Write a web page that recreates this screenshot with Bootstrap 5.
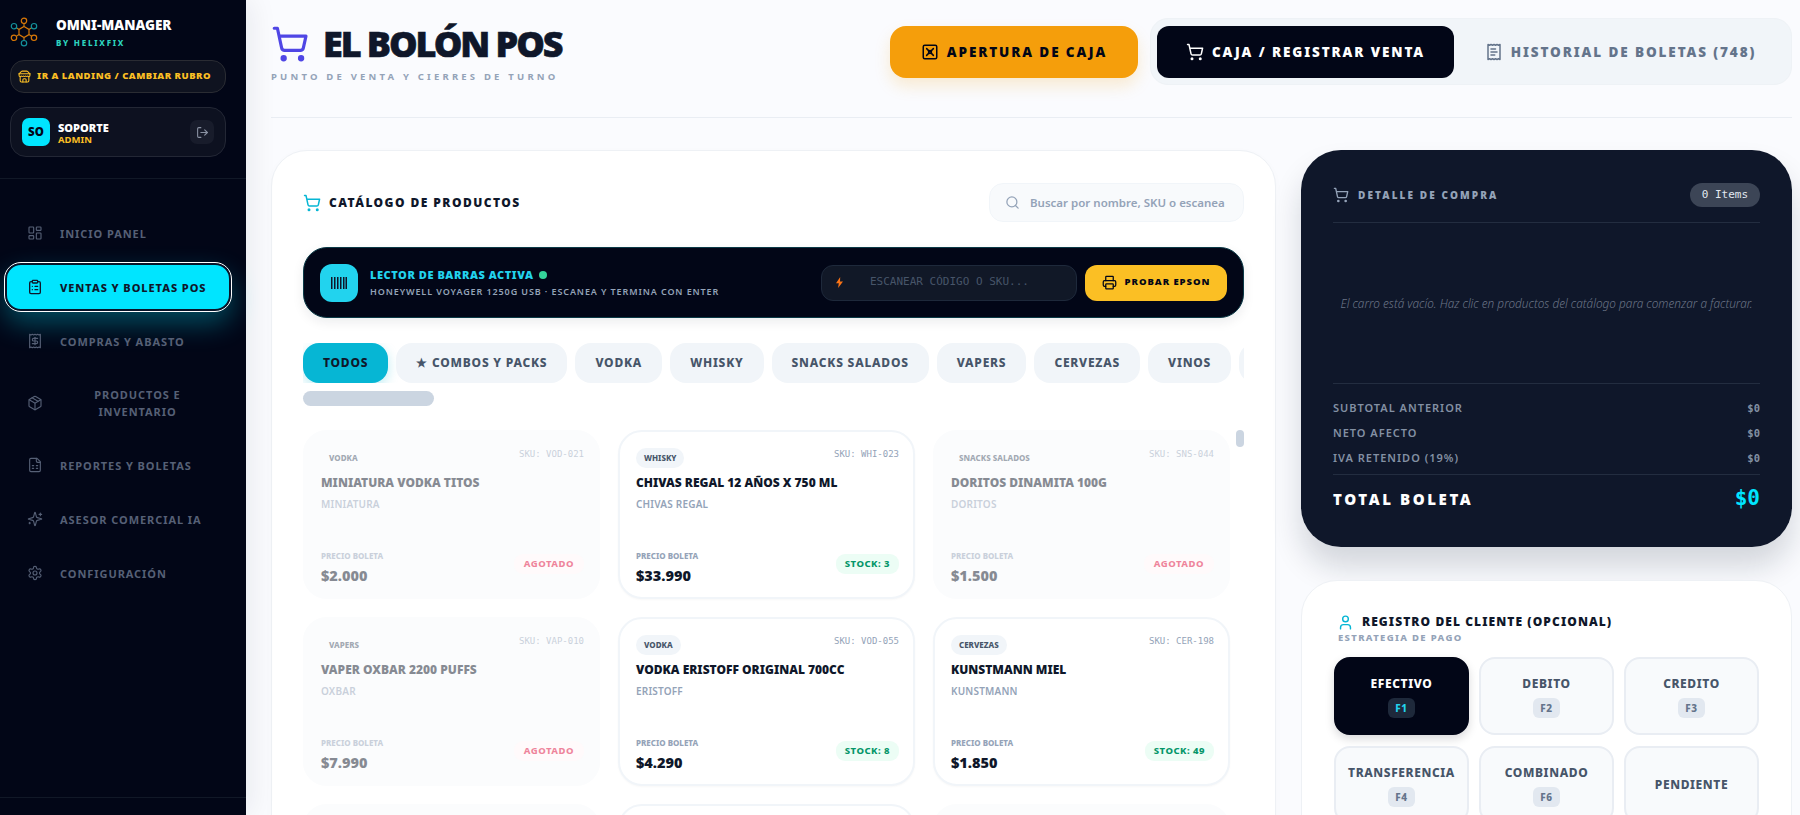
<!DOCTYPE html>
<html lang="es">
  <head>
    <meta charset="UTF-8" />
    <meta name="viewport" content="width=device-width, initial-scale=1.0" />
    <title>El Bolón POS</title>
    <link
      href="https://cdn.jsdelivr.net/npm/bootstrap@5.3.2/dist/css/bootstrap.min.css"
      rel="stylesheet"
    />
    <style>
      html, body { height: 815px; overflow: hidden; }
      body { background: #fafbfe; font-family: "Noto Sans", "Open Sans", sans-serif; color: #0f172a; }
      .ic { fill: none; stroke: currentColor; stroke-width: 2; stroke-linecap: round; stroke-linejoin: round; flex-shrink: 0; }
      .mono { font-family: "DejaVu Sans Mono", monospace; }

      .side { width: 246px; height: 815px; background: #020617; box-shadow: 6px 0 26px rgba(15,23,42,.07); position: relative; z-index: 2; }
      .side-top { height: 179px; padding: 17px 20px 0 10px; border-bottom: 1px solid #111827; }
      .brand-row { gap: 18px; }
      .brand-name { font-size: 13.5px; font-weight: 900; color: #fff; line-height: 16px; }
      .brand-by { font-size: 8px; font-weight: 800; letter-spacing: .22em; color: #2dd4bf; line-height: 10px; margin-top: 5px; }
      .landing-btn { height: 33px; margin-top: 12px; border: 1px solid #2a2c33; border-radius: 14px; background: #0f1320; color: #fbbf24; font-size: 9.5px; font-weight: 900; letter-spacing: .05em; padding: 0 7px; white-space: nowrap; gap: 6px; }
      .user-box { height: 50px; margin-top: 14px; border: 1px solid #232735; border-radius: 16px; background: #0d1120; padding: 0 11px; }
      .avatar { width: 28px; height: 28px; border-radius: 7px; background: #00e5ff; color: #020617; font-size: 11.5px; font-weight: 900; }
      .user-name { font-size: 11px; font-weight: 900; color: #fff; line-height: 12px; padding-top: 3px; }
      .user-role { font-size: 9.5px; font-weight: 700; color: #fbbf24; line-height: 11px; }
      .logout { width: 24px; height: 24px; border-radius: 7px; background: #181c2b; color: #8a92a3; }
      .side-nav { padding: 31px 20px 0 10px; gap: 8px; }
      .side-link { min-height: 46px; padding: 0 11px 0 17px; color: #566076; font-size: 11px; font-weight: 700; letter-spacing: .085em; text-decoration: none; gap: 17px; border-radius: 16px; line-height: 17px; }
      .side-link svg { stroke-width: 1.7; }
      .side-link.tall { min-height: 62px; }
      .side-link.on { min-height: 48px; margin: -1px -5px; padding-left: 20px; padding-right: 16px; color: #0f172a; background: #00e5ff; border: 2px solid #08152a; outline: 1px solid #fff; box-shadow: 0 12px 28px rgba(0,229,255,.32); font-weight: 800; }
      .side-link.on svg { stroke-width: 2; }
      .side-link span { flex: 1; }
      .side-foot { position: absolute; left: 0; right: 0; top: 797px; border-top: 1px solid #111827; }

      .main-area { padding: 0 8px 0 25px; min-width: 0; }
      .top-bar { height: 118px; border-bottom: 1px solid #e9edf3; }
      .title-row { margin-top: 23px; gap: 14px; }
      .cart-hero { color: #4f46e5; }
      .page-title { font-size: 36px; font-weight: 900; letter-spacing: -.058em; line-height: 42px; color: #0f172a; margin: 0; -webkit-text-stroke: .6px #0f172a; }
      .page-sub { font-size: 9.5px; font-weight: 700; letter-spacing: .337em; color: #94a3b8; line-height: 12px; margin-top: 6px; }
      .open-btn { width: 248px; height: 52px; margin-top: 26px; border-radius: 16px; border: 0; background: #f59e0b; color: #020617; font-size: 13.5px; font-weight: 900; letter-spacing: .14em; box-shadow: 0 8px 16px rgba(245,158,11,.18); }
      .tab-wrap { width: 642px; height: 67px; margin: 18px 0 0 12px; padding: 7px 7px 7px 6px; background: #f1f5f9; border: 1px solid #eef2f6; border-radius: 18px; }
      .tab-one { width: 297px; height: 52px; border: 0; border-radius: 12px; background: #020617; color: #fff; font-size: 13.5px; font-weight: 900; letter-spacing: .14em; }
      .tab-two { flex: 1; height: 52px; border: 0; padding-left: 9px; background: transparent; color: #64748b; font-size: 13.5px; font-weight: 900; letter-spacing: .14em; }

      .work-grid { display: grid; grid-template-columns: 1005px 491px; gap: 25px; margin-top: 32px; }
      .cat-panel { height: 720px; background: #fff; border: 1px solid #eef1f5; border-radius: 36px; padding: 32px 31px; box-shadow: 0 2px 10px rgba(15,23,42,.02); overflow: hidden; }
      .panel-title { font-size: 12px; font-weight: 900; letter-spacing: .12em; color: #0f172a; padding-top: 1px; }
      .cat-cart { color: #06b6d4; }
      .search-box { width: 255px; height: 39px; background: #f8fafc; border: 1px solid #f1f5f9; border-radius: 14px; padding: 0 15px; color: #94a3b8; font-size: 11.5px; font-weight: 600; white-space: nowrap; gap: 10px; }
      .scan-bar { height: 71px; margin-top: 25px; background: #020617; border-radius: 24px; border: 1px solid #0b3a47; box-shadow: 0 4px 12px rgba(15,23,42,.08); padding: 0 16px; }
      .scan-ico { width: 38px; height: 38px; border-radius: 12px; background: #22d3ee; color: #0f172a; }
      .scan-head { font-size: 11px; font-weight: 900; letter-spacing: .05em; color: #22d3ee; line-height: 14px; }
      .scan-dot { width: 8px; height: 8px; border-radius: 50%; background: #34d399; display: inline-block; margin-left: 6px; }
      .scan-text { font-size: 9px; font-weight: 600; letter-spacing: .1em; color: #94a3b8; line-height: 12px; margin-top: 4px; }
      .scan-input { width: 256px; height: 36px; background: #111827; border: 1px solid #1e293b; border-radius: 12px; color: #475569; font-size: 11px; padding-left: 14px; gap: 27px; }
      .epson-btn { width: 142px; height: 36px; margin-left: 8px; border: 0; border-radius: 12px; background: #fbbf24; color: #020617; font-size: 9.5px; font-weight: 900; letter-spacing: .1em; gap: 8px; }
      .chip-row { gap: 8px; margin-top: 25px; overflow: hidden; }
      .chip { height: 40px; padding: 0 20px; flex-shrink: 0; border-radius: 16px; background: #f1f5f9; color: #475569; font-size: 12px; font-weight: 800; letter-spacing: .065em; white-space: nowrap; }
      .chip.on { background: #06b6d4; color: #0f172a; box-shadow: 0 4px 12px rgba(6,182,212,.25); }
      .chip-thumb { width: 131px; height: 15px; border-radius: 8px; background: #cbd5e1; margin-top: 8px; }
      .grid-wrap { margin-top: 24px; position: relative; height: 400px; overflow: hidden; }
      .grid-thumb { position: absolute; right: 0; top: 0; width: 8px; height: 17px; border-radius: 4px; background: #cbd5e1; }
      .prod-grid { display: grid; grid-template-columns: repeat(3, 297px); gap: 18px; }
      .prod { height: 169px; background: #fff; border: 2px solid #f1f5f9; border-radius: 24px; padding: 16px 14px 0 16px; box-shadow: 0 1px 2px rgba(15,23,42,.03); }
      .prod.off { background: #f8fafc; border-color: #f8fafc; box-shadow: none; opacity: .5; }
      .prod-tag { font-size: 8px; font-weight: 800; background: #f1f5f9; color: #475569; border-radius: 10px; padding: 0 8px; height: 20px; line-height: 20px; }
      .prod.off .prod-tag { background: transparent; }
      .prod-sku { font-size: 9px; color: #94a3b8; line-height: 12px; }
      .prod-name { font-size: 12px; font-weight: 900; color: #0f172a; line-height: 16px; margin-top: 7px; }
      .prod-brand { font-size: 10px; font-weight: 600; color: #94a3b8; line-height: 14px; margin-top: 6px; letter-spacing: .02em; }
      .prod-foot { margin-top: 39px; }
      .prod-label { font-size: 8px; font-weight: 800; color: #94a3b8; line-height: 11px; }
      .prod-price { font-size: 14.5px; font-weight: 900; color: #0f172a; line-height: 20px; margin-top: 4px; }
      .stock { height: 20px; padding: 0 9px; border-radius: 9px; background: #ecfdf5; color: #059669; font-size: 9.5px; font-weight: 800; letter-spacing: .05em; line-height: 20px; margin-top: 4px; }
      .stock.out { background: #fff7f8; color: #df0a3c; padding: 0 10px; }

      .cart-panel { height: 397px; background: #0f172a; border-radius: 40px; padding: 32px; box-shadow: 0 20px 30px rgba(15,23,42,.16); color: #94a3b8; }
      .cart-head { height: 41px; border-bottom: 1px solid #232d40; padding-bottom: 14px; }
      .cart-title { font-size: 10px; font-weight: 900; letter-spacing: .21em; color: #94a3b8; gap: 9px; }
      .cart-count { height: 24px; padding: 0 12px; border-radius: 12px; background: #3c4556; color: #e2e8f0; font-size: 11px; line-height: 24px; }
      .cart-empty { height: 161px; padding-top: 2px; font-size: 11.8px; font-style: italic; font-weight: 300; color: #6b7587; border-bottom: 1px solid #232d40; white-space: nowrap; }
      .cart-row { font-size: 11px; font-weight: 600; letter-spacing: .09em; color: #8390a3; line-height: 16px; margin-top: 9px; }
      .cart-row .mono { font-size: 10.5px; letter-spacing: 0; }
      .cart-total { border-top: 1px solid #232d40; margin-top: 8px; padding-top: 8px; }
      .total-label { font-size: 15px; font-weight: 900; letter-spacing: .173em; color: #fff; }
      .total-value { font-size: 21px; font-weight: 700; color: #00e5ff; }

      .client-panel { height: 300px; margin-top: 33px; background: #fff; border: 1px solid #eef1f5; border-radius: 36px; padding: 32px; }
      .client-title { font-size: 12px; font-weight: 900; letter-spacing: .09em; color: #0f172a; gap: 8px; padding-left: 3px; line-height: 18px; }
      .client-cart { color: #06b6d4; }
      .client-sub { font-size: 9.5px; font-weight: 800; letter-spacing: .14em; color: #94a3b8; line-height: 11px; padding-left: 4px; margin-top: 1px; }
      .pay-grid { display: grid; grid-template-columns: repeat(3, 1fr); gap: 11px 10px; margin-top: 14px; }
      .pay-btn { height: 78px; border: 2px solid #e9edf3; border-radius: 16px; background: #f8fafc; color: #475569; font-size: 12px; font-weight: 800; letter-spacing: .05em; gap: 5px; padding: 0; }
      .pay-btn.on { background: #020617; border-color: #020617; color: #fff; box-shadow: 0 4px 10px rgba(2,6,23,.15); }
      .pay-key { width: 27px; height: 20px; line-height: 20px; border-radius: 6px; background: #e2e8f0; color: #64748b; font-size: 10px; font-weight: 800; }
      .pay-btn.on .pay-key { background: #1e293b; color: #22d3ee; }
    </style>
  </head>
  <body>
    <svg width="0" height="0" class="position-absolute">
      <symbol id="i-cart" viewBox="0 0 24 24"><circle cx="8" cy="21" r="1" /><circle cx="19" cy="21" r="1" /><path d="M2.05 2.05h2l2.66 12.42a2 2 0 0 0 2 1.58h9.78a2 2 0 0 0 1.95-1.57l1.65-7.43H5.12" /></symbol>
      <symbol id="i-store" viewBox="0 0 24 24"><path d="m2 7 4.41-4.41A2 2 0 0 1 7.83 2h8.34a2 2 0 0 1 1.42.59L22 7" /><path d="M4 12v8a2 2 0 0 0 2 2h12a2 2 0 0 0 2-2v-8" /><path d="M15 22v-4a2 2 0 0 0-2-2h-2a2 2 0 0 0-2 2v4" /><path d="M2 7h20" /><path d="M22 7v3a2 2 0 0 1-2 2 2.7 2.7 0 0 1-1.59-.63.7.7 0 0 0-.82 0A2.7 2.7 0 0 1 16 12a2.7 2.7 0 0 1-1.59-.63.7.7 0 0 0-.82 0A2.7 2.7 0 0 1 12 12a2.7 2.7 0 0 1-1.59-.63.7.7 0 0 0-.82 0A2.7 2.7 0 0 1 8 12a2.7 2.7 0 0 1-1.59-.63.7.7 0 0 0-.82 0A2.7 2.7 0 0 1 4 12a2 2 0 0 1-2-2V7" /></symbol>
      <symbol id="i-out" viewBox="0 0 24 24"><path d="M9 21H5a2 2 0 0 1-2-2V5a2 2 0 0 1 2-2h4" /><path d="m16 17 5-5-5-5" /><path d="M21 12H9" /></symbol>
      <symbol id="i-dash" viewBox="0 0 24 24"><rect x="3" y="3" width="7" height="9" rx="1" /><rect x="14" y="3" width="7" height="5" rx="1" /><rect x="14" y="12" width="7" height="9" rx="1" /><rect x="3" y="16" width="7" height="5" rx="1" /></symbol>
      <symbol id="i-clip" viewBox="0 0 24 24"><rect x="8" y="2" width="8" height="4" rx="1" /><path d="M16 4h2a2 2 0 0 1 2 2v14a2 2 0 0 1-2 2H6a2 2 0 0 1-2-2V6a2 2 0 0 1 2-2h2" /><path d="M12 11h4M12 16h4M8 11h.01M8 16h.01" /></symbol>
      <symbol id="i-receipt" viewBox="0 0 24 24"><path d="M4 2v20l2-1 2 1 2-1 2 1 2-1 2 1 2-1 2 1V2l-2 1-2-1-2 1-2-1-2 1-2-1-2 1Z" /><path d="M16 8h-6a2 2 0 1 0 0 4h4a2 2 0 1 1 0 4H8" /><path d="M12 17.5v-11" /></symbol>
      <symbol id="i-box" viewBox="0 0 24 24"><path d="M11 21.73a2 2 0 0 0 2 0l7-4A2 2 0 0 0 21 16V8a2 2 0 0 0-1-1.73l-7-4a2 2 0 0 0-2 0l-7 4A2 2 0 0 0 3 8v8a2 2 0 0 0 1 1.73z" /><path d="M12 22V12" /><path d="m3.3 7 7.703 4.734a2 2 0 0 0 1.994 0L20.7 7" /><path d="m7.5 4.27 9 5.15" /></symbol>
      <symbol id="i-sheet" viewBox="0 0 24 24"><path d="M15 2H6a2 2 0 0 0-2 2v16a2 2 0 0 0 2 2h12a2 2 0 0 0 2-2V7Z" /><path d="M14 2v4a2 2 0 0 0 2 2h4" /><path d="M8 13h2M14 13h2M8 17h2M14 17h2" /></symbol>
      <symbol id="i-spark" viewBox="0 0 24 24"><path d="M9.937 15.5A2 2 0 0 0 8.5 14.063l-6.135-1.582a.5.5 0 0 1 0-.962L8.5 9.936A2 2 0 0 0 9.937 8.5l1.582-6.135a.5.5 0 0 1 .963 0L14.063 8.5A2 2 0 0 0 15.5 9.937l6.135 1.581a.5.5 0 0 1 0 .964L15.5 14.063a2 2 0 0 0-1.437 1.437l-1.582 6.135a.5.5 0 0 1-.963 0z" /><path d="M20 3v4M22 5h-4M4 17v2M5 18H3" /></symbol>
      <symbol id="i-gear" viewBox="0 0 24 24"><path d="M12.22 2h-.44a2 2 0 0 0-2 2v.18a2 2 0 0 1-1 1.73l-.43.25a2 2 0 0 1-2 0l-.15-.08a2 2 0 0 0-2.73.73l-.22.38a2 2 0 0 0 .73 2.73l.15.1a2 2 0 0 1 1 1.72v.51a2 2 0 0 1-1 1.74l-.15.09a2 2 0 0 0-.73 2.73l.22.38a2 2 0 0 0 2.73.73l.15-.08a2 2 0 0 1 2 0l.43.25a2 2 0 0 1 1 1.73V20a2 2 0 0 0 2 2h.44a2 2 0 0 0 2-2v-.18a2 2 0 0 1 1-1.73l.43-.25a2 2 0 0 1 2 0l.15.08a2 2 0 0 0 2.73-.73l.22-.39a2 2 0 0 0-.73-2.73l-.15-.08a2 2 0 0 1-1-1.74v-.5a2 2 0 0 1 1-1.74l.15-.09a2 2 0 0 0 .73-2.73l-.22-.38a2 2 0 0 0-2.73-.73l-.15.08a2 2 0 0 1-2 0l-.43-.25a2 2 0 0 1-1-1.73V4a2 2 0 0 0-2-2z" /><circle cx="12" cy="12" r="3" /></symbol>
      <symbol id="i-cash" viewBox="0 0 24 24"><rect x="3" y="3" width="18" height="18" rx="2" /><path d="m7.500 7.500 9 9M16.500 7.500l-9 9" /><circle cx="12" cy="12" r="2" /></symbol>
      <symbol id="i-ticket" viewBox="0 0 24 24"><path d="M4 2v20l2-1 2 1 2-1 2 1 2-1 2 1 2-1 2 1V2l-2 1-2-1-2 1-2-1-2 1-2-1-2 1Z" /><path d="M14 8H8M16 12H8M13 16H8" /></symbol>
      <symbol id="i-search" viewBox="0 0 24 24"><circle cx="11" cy="11" r="8" /><path d="m21 21-4.3-4.3" /></symbol>
      <symbol id="i-print" viewBox="0 0 24 24"><path d="M6 18H4a2 2 0 0 1-2-2v-5a2 2 0 0 1 2-2h16a2 2 0 0 1 2 2v5a2 2 0 0 1-2 2h-2" /><path d="M6 9V3a1 1 0 0 1 1-1h10a1 1 0 0 1 1 1v6" /><rect x="6" y="14" width="12" height="8" rx="1" /></symbol>
      <symbol id="i-user" viewBox="0 0 24 24"><path d="M19 21v-2a4 4 0 0 0-4-4H9a4 4 0 0 0-4 4v2" /><circle cx="12" cy="7" r="4" /></symbol>
    </svg>

    <div class="d-flex">
      <aside class="side flex-shrink-0">
        <div class="side-top">
          <div class="brand-row d-flex">
            <svg width="28" height="30" viewBox="0 0 28 30" fill="none" stroke-width="1.2">
              <path d="M14 9.500l5 2.900v5.200l-5 2.900-5-2.900v-5.200z" stroke="#d97706" />
              <path d="M14 6.500v3M19 12.400l2.600-1.600M19 17.600l2.600 1.600M14 20.500v3M9 17.600l-2.600 1.600M9 12.400l-2.600-1.600" stroke="#b7791f" />
              <circle cx="14" cy="3.800" r="2.700" stroke="#d97706" />
              <circle cx="24" cy="9.200" r="2.700" stroke="#14919b" />
              <circle cx="24" cy="20.800" r="2.700" stroke="#d97706" />
              <circle cx="14" cy="26.200" r="2.700" stroke="#14919b" />
              <circle cx="4" cy="20.800" r="2.700" stroke="#d97706" />
              <circle cx="4" cy="9.200" r="2.700" stroke="#14919b" />
            </svg>
            <div>
              <div class="brand-name">OMNI-MANAGER</div>
              <div class="brand-by">BY HELIXFIX</div>
            </div>
          </div>
          <div class="landing-btn d-flex align-items-center">
            <svg class="ic" width="13" height="13"><use href="#i-store" /></svg>
            IR A LANDING / CAMBIAR RUBRO
          </div>
          <div class="user-box d-flex align-items-center">
            <div class="avatar d-flex align-items-center justify-content-center">SO</div>
            <div class="ms-2 flex-grow-1">
              <div class="user-name">SOPORTE</div>
              <div class="user-role">ADMIN</div>
            </div>
            <div class="logout d-flex align-items-center justify-content-center">
              <svg class="ic" width="13" height="13"><use href="#i-out" /></svg>
            </div>
          </div>
        </div>
        <nav class="side-nav d-flex flex-column">
          <a class="side-link d-flex align-items-center" href="#"><svg class="ic" width="16" height="16"><use href="#i-dash" /></svg><span>INICIO PANEL</span></a>
          <a class="side-link on d-flex align-items-center" href="#"><svg class="ic" width="16" height="16"><use href="#i-clip" /></svg><span>VENTAS Y BOLETAS POS</span></a>
          <a class="side-link d-flex align-items-center" href="#"><svg class="ic" width="16" height="16"><use href="#i-receipt" /></svg><span>COMPRAS Y ABASTO</span></a>
          <a class="side-link tall d-flex align-items-center" href="#"><svg class="ic" width="16" height="16"><use href="#i-box" /></svg><span class="text-center">PRODUCTOS E INVENTARIO</span></a>
          <a class="side-link d-flex align-items-center" href="#"><svg class="ic" width="16" height="16"><use href="#i-sheet" /></svg><span>REPORTES Y BOLETAS</span></a>
          <a class="side-link d-flex align-items-center" href="#"><svg class="ic" width="16" height="16"><use href="#i-spark" /></svg><span>ASESOR COMERCIAL IA</span></a>
          <a class="side-link d-flex align-items-center" href="#"><svg class="ic" width="16" height="16"><use href="#i-gear" /></svg><span>CONFIGURACIÓN</span></a>
        </nav>
        <div class="side-foot"></div>
      </aside>

      <main class="main-area flex-grow-1">
        <header class="top-bar d-flex justify-content-between">
          <div>
            <div class="title-row d-flex align-items-center">
              <svg class="ic cart-hero" width="38" height="38"><use href="#i-cart" /></svg>
              <h1 class="page-title">EL BOLÓN POS</h1>
            </div>
            <div class="page-sub">PUNTO DE VENTA Y CIERRES DE TURNO</div>
          </div>
          <div class="d-flex align-items-start">
            <button class="open-btn d-flex align-items-center justify-content-center gap-2">
              <svg class="ic" width="18" height="18"><use href="#i-cash" /></svg>
              APERTURA DE CAJA
            </button>
            <div class="tab-wrap d-flex">
              <button class="tab-one d-flex align-items-center justify-content-center gap-2">
                <svg class="ic" width="18" height="18"><use href="#i-cart" /></svg>
                CAJA / REGISTRAR VENTA
              </button>
              <button class="tab-two d-flex align-items-center justify-content-center gap-2">
                <svg class="ic" width="18" height="18"><use href="#i-ticket" /></svg>
                HISTORIAL DE BOLETAS (748)
              </button>
            </div>
          </div>
        </header>

        <div class="work-grid">
          <section class="cat-panel">
            <div class="d-flex justify-content-between align-items-center">
              <div class="panel-title d-flex align-items-center gap-2">
                <svg class="ic cat-cart" width="18" height="18"><use href="#i-cart" /></svg>
                CATÁLOGO DE PRODUCTOS
              </div>
              <div class="search-box d-flex align-items-center">
                <svg class="ic" width="15" height="15"><use href="#i-search" /></svg>
                Buscar por nombre, SKU o escanea
              </div>
            </div>

            <div class="scan-bar d-flex align-items-center">
              <div class="scan-ico d-flex align-items-center justify-content-center">
                <svg width="16" height="14" viewBox="0 0 16 14" fill="currentColor"><path d="M0 1h1.500v12H0zM3 1h1.500v12H3zM6 1h1.500v12H6zM9 1h1.500v12H9zM12 1h1.500v12H12zM14.500 1H16v12h-1.500z" /></svg>
              </div>
              <div class="ms-2 ps-1 flex-grow-1">
                <div class="scan-head">LECTOR DE BARRAS ACTIVA<span class="scan-dot"></span></div>
                <div class="scan-text">HONEYWELL VOYAGER 1250G USB · ESCANEA Y TERMINA CON ENTER</div>
              </div>
              <div class="scan-input mono d-flex align-items-center">
                <svg width="7" height="11" viewBox="0 0 7 11" fill="#f97316"><path d="M4.200 0 0 6.200h2.800L2.100 11 7 4.500H4z" /></svg>
                ESCANEAR CÓDIGO O SKU...
              </div>
              <button class="epson-btn d-flex align-items-center justify-content-center">
                <svg class="ic" width="15" height="15"><use href="#i-print" /></svg>
                PROBAR EPSON
              </button>
            </div>

            <div class="chip-row d-flex">
              <div class="chip on d-flex align-items-center">TODOS</div>
              <div class="chip d-flex align-items-center">★ COMBOS Y PACKS</div>
              <div class="chip d-flex align-items-center">VODKA</div>
              <div class="chip d-flex align-items-center">WHISKY</div>
              <div class="chip d-flex align-items-center">SNACKS SALADOS</div>
              <div class="chip d-flex align-items-center">VAPERS</div>
              <div class="chip d-flex align-items-center">CERVEZAS</div>
              <div class="chip d-flex align-items-center">VINOS</div>
              <div class="chip d-flex align-items-center">&nbsp;</div>
            </div>
            <div class="chip-thumb"></div>

            <div class="grid-wrap">
              <div class="grid-thumb"></div>
              <div class="prod-grid" id="prodGrid"></div>
            </div>
          </section>

          <div>
            <section class="cart-panel">
              <div class="cart-head d-flex justify-content-between align-items-center">
                <div class="cart-title d-flex align-items-center">
                  <svg class="ic" width="16" height="16"><use href="#i-cart" /></svg>
                  DETALLE DE COMPRA
                </div>
                <div class="cart-count mono">0 Items</div>
              </div>
              <div class="cart-empty d-flex align-items-center justify-content-center">El carro está vacío. Haz clic en productos del catálogo para comenzar a facturar.</div>
              <div class="cart-row d-flex justify-content-between mt-3"><span>SUBTOTAL ANTERIOR</span><span class="mono">$0</span></div>
              <div class="cart-row d-flex justify-content-between"><span>NETO AFECTO</span><span class="mono">$0</span></div>
              <div class="cart-row d-flex justify-content-between"><span>IVA RETENIDO (19%)</span><span class="mono">$0</span></div>
              <div class="cart-total d-flex justify-content-between align-items-center">
                <span class="total-label">TOTAL BOLETA</span>
                <span class="total-value mono">$0</span>
              </div>
            </section>

            <section class="client-panel">
              <div class="client-title d-flex align-items-center">
                <svg class="ic client-cart" width="17" height="17"><use href="#i-user" /></svg>
                REGISTRO DEL CLIENTE (OPCIONAL)
              </div>
              <div class="client-sub">ESTRATEGIA DE PAGO</div>
              <div class="pay-grid">
                <button class="pay-btn on d-flex flex-column align-items-center justify-content-center">EFECTIVO<span class="pay-key">F1</span></button>
                <button class="pay-btn d-flex flex-column align-items-center justify-content-center">DEBITO<span class="pay-key">F2</span></button>
                <button class="pay-btn d-flex flex-column align-items-center justify-content-center">CREDITO<span class="pay-key">F3</span></button>
                <button class="pay-btn d-flex flex-column align-items-center justify-content-center">TRANSFERENCIA<span class="pay-key">F4</span></button>
                <button class="pay-btn d-flex flex-column align-items-center justify-content-center">COMBINADO<span class="pay-key">F6</span></button>
                <button class="pay-btn d-flex flex-column align-items-center justify-content-center">PENDIENTE</button>
              </div>
            </section>
          </div>
        </div>
      </main>
    </div>

    <script>
      const products = [
        { tag: "VODKA", sku: "VOD-021", name: "MINIATURA VODKA TITOS", brand: "MINIATURA", price: "$2.000", stock: 0 },
        { tag: "WHISKY", sku: "WHI-023", name: "CHIVAS REGAL 12 AÑOS X 750 ML", brand: "CHIVAS REGAL", price: "$33.990", stock: 3 },
        { tag: "SNACKS SALADOS", sku: "SNS-044", name: "DORITOS DINAMITA 100G", brand: "DORITOS", price: "$1.500", stock: 0 },
        { tag: "VAPERS", sku: "VAP-010", name: "VAPER OXBAR 2200 PUFFS", brand: "OXBAR", price: "$7.990", stock: 0 },
        { tag: "VODKA", sku: "VOD-055", name: "VODKA ERISTOFF ORIGINAL 700CC", brand: "ERISTOFF", price: "$4.290", stock: 8 },
        { tag: "CERVEZAS", sku: "CER-198", name: "KUNSTMANN MIEL", brand: "KUNSTMANN", price: "$1.850", stock: 49 },
      ];

      const grid = document.getElementById("prodGrid");
      products.forEach((p) => {
        const badge = p.stock
          ? `<span class="stock">STOCK: ${p.stock}</span>`
          : `<span class="stock out">AGOTADO</span>`;
        grid.innerHTML += `
          <div class="prod ${p.stock ? "" : "off"}">
            <div class="d-flex justify-content-between align-items-start">
              <span class="prod-tag">${p.tag}</span>
              <span class="prod-sku mono">SKU: ${p.sku}</span>
            </div>
            <div class="prod-name">${p.name}</div>
            <div class="prod-brand">${p.brand}</div>
            <div class="prod-foot d-flex justify-content-between align-items-start">
              <div>
                <div class="prod-label">PRECIO BOLETA</div>
                <div class="prod-price">${p.price}</div>
              </div>
              ${badge}
            </div>
          </div>`;
      });
      // third row only peeks in at the bottom of the window
      grid.innerHTML += `<div class="prod off"></div><div class="prod"></div><div class="prod off"></div>`;
    </script>
    <script src="https://cdn.jsdelivr.net/npm/bootstrap@5.3.2/dist/js/bootstrap.bundle.min.js"></script>
  </body>
</html>
